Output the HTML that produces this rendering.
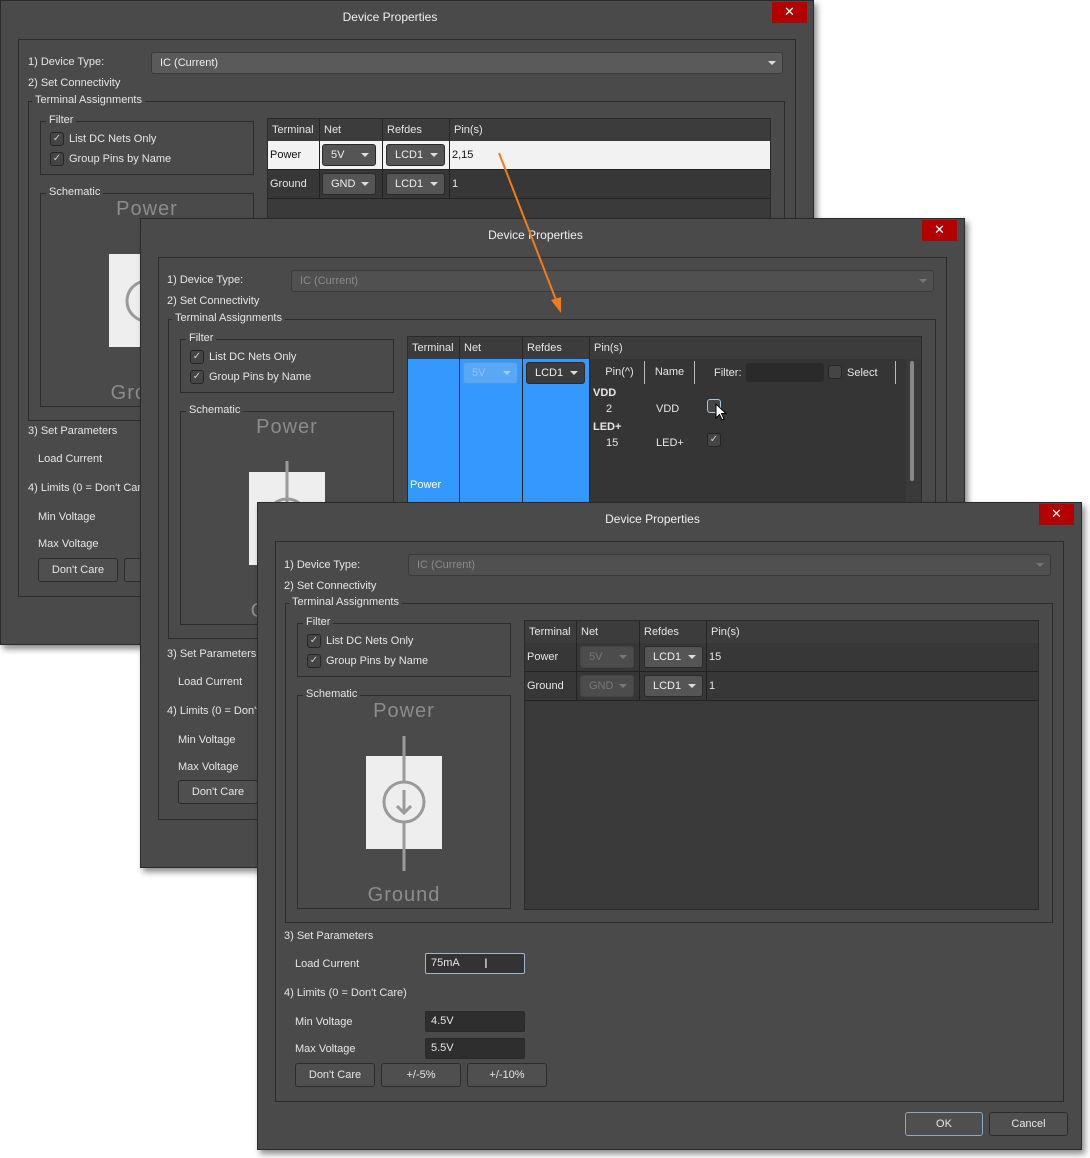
<!DOCTYPE html>
<html><head><meta charset="utf-8">
<style>
*{box-sizing:border-box;margin:0;padding:0}
body{width:1090px;height:1158px;background:#fff;position:relative;overflow:hidden;font-family:"Liberation Sans","DejaVu Sans",sans-serif;font-size:11px;color:#e6e6e6}
.dlg{position:absolute;background:#4a4a4a;border:1px solid #2a2a2a;box-shadow:3px 4px 6px rgba(0,0,0,.45)}
.dlg div,.dlg span{position:absolute}
.title{left:0;right:34px;top:9px;text-align:center;font-size:12px;color:#f0f0f0}
.close{top:1px;width:35px;height:21px;background:#b30000;color:#fff;text-align:center;font-size:13px;line-height:20px}
.outer{left:17px;top:38px;right:17px;bottom:47px;border:1px solid #2c2c2c}
.lbl{white-space:nowrap}
.combo{left:150px;right:30px;top:51px;height:22px;border:1px solid #3a3a3a;border-radius:3px;background:#505050;padding-left:8px;line-height:20px;color:#8a8a8a}
.combo.en{background:#5a5a5a;color:#f0f0f0}
.tri{width:0;height:0;border-left:4px solid transparent;border-right:4px solid transparent;border-top:4px solid #ddd}
.grp{border:1px solid #2c2c2c}
.glab{background:#4a4a4a;padding:0 3px;top:-8px;left:5px;white-space:nowrap}
.cb{width:14px;height:14px;border:1px solid #262626;border-radius:3px;background:#454545;color:#ccc;font-size:10px;line-height:12px;text-align:center}
.sch{font-size:20px;color:#8c8c8c;left:0;right:0;text-align:center;letter-spacing:1px}
.tbl{left:266px;right:42px;top:117px;height:290px;background:#3a3a3a;border:1px solid #2a2a2a}
.th{top:0;height:22px;background:#3c3c3c;line-height:22px;padding-left:4px;border-right:1px solid #262626}
.row{left:0;right:0;height:29px;background:#373737;border-bottom:1px solid #222;line-height:29px}
.cell{top:0;bottom:0;border-right:1px solid #222;padding-left:2px}
.cmb{height:22px;top:3px;border:1px solid #2a2a2a;border-radius:3px;background:#555;line-height:20px;padding-left:8px;color:#eee}
.cmb.dis{background:#4c4c4c;color:#777;border-color:#444}
.cmb .tri{right:6px;top:8px}
.cmb.dis .tri{border-top-color:#777}
.inp{height:21px;border:1px solid #2a2a2a;border-radius:2px;background:#2e2e2e;line-height:19px;padding-left:5px;width:100px;left:167px}
.btn{height:24px;width:80px;border:1px solid #2c2c2c;border-radius:3px;background:#4f4f4f;text-align:center;line-height:22px}
</style></head><body>

<!-- Dialog 1 -->
<div class="dlg" style="left:0;top:0;width:814px;height:645px">
 <div class="title">Device Properties</div>
 <div class="close" style="left:771px">✕</div>
 <div class="outer"></div>
 <span class="lbl" style="left:27px;top:55px">1) Device Type:</span>
 <div class="combo en">IC (Current)<div class="tri" style="right:6px;top:8px"></div></div>
 <span class="lbl" style="left:27px;top:76px">2) Set Connectivity</span>
 <div class="grp" style="left:27px;right:28px;top:100px;height:320px"><span class="glab" style="left:3px">Terminal Assignments</span></div>
 <div class="grp" style="left:39px;top:120px;width:214px;height:54px"><span class="glab">Filter</span></div>
 <div class="cb" style="left:49px;top:131px">✓</div><span class="lbl" style="left:68px;top:132px">List DC Nets Only</span>
 <div class="cb" style="left:49px;top:151px">✓</div><span class="lbl" style="left:68px;top:152px">Group Pins by Name</span>
 <div class="grp" style="left:39px;top:192px;width:214px;height:214px"><span class="glab">Schematic</span>
  <span class="sch" style="top:4px">Power</span>
  <div style="left:68px;top:60px;width:76px;height:93px;background:#eee"></div>
  <span class="sch" style="top:188px">Ground</span>
 </div>
 <svg style="position:absolute;left:107px;top:240px" width="80" height="140"><line x1="39" y1="2" x2="39" y2="135" stroke="#9a9a9a" stroke-width="3"/><circle cx="39" cy="60" r="20" fill="none" stroke="#9a9a9a" stroke-width="3"/></svg>
 <div class="tbl">
  <div class="th" style="left:0;width:52px">Terminal</div>
  <div class="th" style="left:52px;width:63px">Net</div>
  <div class="th" style="left:115px;width:67px">Refdes</div>
  <div class="th" style="left:182px;right:0;border:0">Pin(s)</div>
  <div class="row" style="top:22px;background:#f2f2f2;color:#111">
   <div class="cell" style="left:0;width:52px">Power</div>
   <div class="cell" style="left:52px;width:63px"><div class="cmb" style="left:2px;width:54px">5V<div class="tri"></div></div></div>
   <div class="cell" style="left:115px;width:67px"><div class="cmb" style="left:3px;width:59px">LCD1<div class="tri"></div></div></div>
   <div class="cell" style="left:182px;right:0;border:0">2,15</div>
  </div>
  <div class="row" style="top:51px">
   <div class="cell" style="left:0;width:52px">Ground</div>
   <div class="cell" style="left:52px;width:63px"><div class="cmb" style="left:2px;width:54px">GND<div class="tri"></div></div></div>
   <div class="cell" style="left:115px;width:67px"><div class="cmb" style="left:3px;width:59px">LCD1<div class="tri"></div></div></div>
   <div class="cell" style="left:182px;right:0;border:0">1</div>
  </div>
 </div>
 <span class="lbl" style="left:27px;top:424px">3) Set Parameters</span>
 <span class="lbl" style="left:37px;top:452px">Load Current</span>
 <span class="lbl" style="left:27px;top:481px">4) Limits (0 = Don't Care)</span>
 <span class="lbl" style="left:37px;top:510px">Min Voltage</span>
 <span class="lbl" style="left:37px;top:537px">Max Voltage</span>
 <div class="btn" style="left:37px;top:557px">Don't Care</div>
 <div class="btn" style="left:123px;top:557px">+/-5%</div>
</div>

<!-- Dialog 2 -->
<div class="dlg" style="left:140px;top:218px;width:825px;height:650px">
 <div class="title">Device Properties</div>
 <div class="close" style="left:781px">✕</div>
 <div class="outer"></div>
 <span class="lbl" style="left:26px;top:55px">1) Device Type:</span>
 <div class="combo">IC (Current)<div class="tri" style="right:6px;top:8px;border-top-color:#777"></div></div>
 <span class="lbl" style="left:26px;top:76px">2) Set Connectivity</span>
 <div class="grp" style="left:27px;right:28px;top:100px;height:320px"><span class="glab" style="left:3px">Terminal Assignments</span></div>
 <div class="grp" style="left:39px;top:120px;width:214px;height:54px"><span class="glab">Filter</span></div>
 <div class="cb" style="left:49px;top:131px">✓</div><span class="lbl" style="left:68px;top:132px">List DC Nets Only</span>
 <div class="cb" style="left:49px;top:151px">✓</div><span class="lbl" style="left:68px;top:152px">Group Pins by Name</span>
 <div class="grp" style="left:39px;top:192px;width:214px;height:214px"><span class="glab">Schematic</span>
  <span class="sch" style="top:4px">Power</span>
  <div style="left:68px;top:60px;width:76px;height:93px;background:#eee"></div>
  <span class="sch" style="top:188px">Ground</span>
 </div>
 <svg style="position:absolute;left:107px;top:240px" width="80" height="140"><line x1="39" y1="2" x2="39" y2="135" stroke="#9a9a9a" stroke-width="3"/><circle cx="39" cy="60" r="20" fill="none" stroke="#9a9a9a" stroke-width="3"/></svg>
 <div class="tbl">
  <div class="th" style="left:0;width:52px">Terminal</div>
  <div class="th" style="left:52px;width:63px">Net</div>
  <div class="th" style="left:115px;width:67px">Refdes</div>
  <div class="th" style="left:182px;right:0;border:0">Pin(s)</div>
  <div style="left:0;width:182px;top:22px;height:150px;background:#3399ff"></div>
  <div style="left:51px;top:22px;width:1px;height:150px;background:#222"></div>
  <div style="left:114px;top:22px;width:1px;height:150px;background:#222"></div>
  <div style="left:181px;top:22px;width:1px;height:150px;background:#222"></div>
  <span style="left:2px;top:142px;color:#fff">Power</span>
  <div class="cmb" style="left:55px;top:25px;width:55px;background:#5aa8f5;border-color:#4b98e5;color:#8cc3f9">5V<div class="tri" style="border-top-color:#a8d2fb"></div></div>
  <div class="cmb" style="left:118px;top:25px;width:59px;background:#3c3c3c">LCD1<div class="tri"></div></div>
  <div style="left:182px;top:22px;width:316px;height:150px;background:#353535">
   <div style="left:5px;top:2px;width:50px;height:23px;border-right:1px solid #bbb;line-height:23px;text-align:center">Pin(^)</div>
   <div style="left:55px;top:2px;width:50px;height:23px;border-right:1px solid #bbb;line-height:23px;text-align:center">Name</div>
   <span style="left:124px;top:8px">Filter:</span>
   <div style="left:156px;top:4px;width:78px;height:19px;background:#2a2a2a;border-radius:3px"></div>
   <div class="cb" style="left:238px;top:6px"></div>
   <span style="left:257px;top:8px">Select</span>
   <div style="left:305px;top:2px;width:1px;height:23px;background:#bbb"></div>
   <span style="left:3px;top:28px;font-weight:bold">VDD</span>
   <span style="left:16px;top:44px">2</span><span style="left:66px;top:44px">VDD</span>
   <div class="cb" style="left:117px;top:40px;border-color:#aac4dd"></div>
   <span style="left:3px;top:62px;font-weight:bold">LED+</span>
   <span style="left:16px;top:78px">15</span><span style="left:66px;top:78px">LED+</span>
   <div class="cb" style="left:117px;top:74px">✓</div>
  </div>
  <div style="left:502px;top:24px;width:4px;height:120px;background:#888;border-radius:2px"></div>
 </div>
 <svg style="position:absolute;left:574px;top:184px" width="14" height="20"><path d="M1 1 L1 15 L4.5 11.5 L7 17 L9 16 L6.5 10.5 L11 10.5 Z" fill="#fff" stroke="#000" stroke-width="1"/></svg>
 <span class="lbl" style="left:26px;top:429px">3) Set Parameters</span>
 <span class="lbl" style="left:37px;top:457px">Load Current</span>
 <span class="lbl" style="left:26px;top:486px">4) Limits (0 = Don't Care)</span>
 <span class="lbl" style="left:37px;top:515px">Min Voltage</span>
 <span class="lbl" style="left:37px;top:542px">Max Voltage</span>
 <div class="btn" style="left:37px;top:561px">Don't Care</div>
</div>

<!-- Dialog 3 -->
<div class="dlg" style="left:257px;top:502px;width:825px;height:648px">
 <div class="title">Device Properties</div>
 <div class="close" style="left:781px">✕</div>
 <div class="outer"></div>
 <span class="lbl" style="left:26px;top:56px">1) Device Type:</span>
 <div class="combo">IC (Current)<div class="tri" style="right:6px;top:8px;border-top-color:#777"></div></div>
 <span class="lbl" style="left:26px;top:77px">2) Set Connectivity</span>
 <div class="grp" style="left:27px;right:28px;top:100px;height:320px"><span class="glab" style="left:3px">Terminal Assignments</span></div>
 <div class="grp" style="left:39px;top:120px;width:214px;height:54px"><span class="glab">Filter</span></div>
 <div class="cb" style="left:49px;top:131px">✓</div><span class="lbl" style="left:68px;top:132px">List DC Nets Only</span>
 <div class="cb" style="left:49px;top:151px">✓</div><span class="lbl" style="left:68px;top:152px">Group Pins by Name</span>
 <div class="grp" style="left:39px;top:192px;width:214px;height:214px"><span class="glab">Schematic</span>
  <span class="sch" style="top:4px">Power</span>
  <div style="left:68px;top:60px;width:76px;height:93px;background:#eee"></div>
  <span class="sch" style="top:188px">Ground</span>
 </div>
 <svg style="position:absolute;left:107px;top:232px" width="80" height="140"><line x1="39" y1="1" x2="39" y2="136" stroke="#9a9a9a" stroke-width="3"/><circle cx="39" cy="67" r="20" fill="#eee" stroke="#9a9a9a" stroke-width="3"/><path d="M39 55 L39 78 M32 71 L39 78 L46 71" fill="none" stroke="#9a9a9a" stroke-width="3"/></svg>
 <div class="tbl">
  <div class="th" style="left:0;width:52px">Terminal</div>
  <div class="th" style="left:52px;width:63px">Net</div>
  <div class="th" style="left:115px;width:67px">Refdes</div>
  <div class="th" style="left:182px;right:0;border:0">Pin(s)</div>
  <div class="row" style="top:22px">
   <div class="cell" style="left:0;width:52px">Power</div>
   <div class="cell" style="left:52px;width:63px"><div class="cmb dis" style="left:3px;width:54px">5V<div class="tri"></div></div></div>
   <div class="cell" style="left:115px;width:67px"><div class="cmb" style="left:4px;width:59px">LCD1<div class="tri"></div></div></div>
   <div class="cell" style="left:182px;right:0;border:0">15</div>
  </div>
  <div class="row" style="top:51px">
   <div class="cell" style="left:0;width:52px">Ground</div>
   <div class="cell" style="left:52px;width:63px"><div class="cmb dis" style="left:3px;width:54px">GND<div class="tri"></div></div></div>
   <div class="cell" style="left:115px;width:67px"><div class="cmb" style="left:4px;width:59px">LCD1<div class="tri"></div></div></div>
   <div class="cell" style="left:182px;right:0;border:0">1</div>
  </div>
 </div>
 <span class="lbl" style="left:26px;top:427px">3) Set Parameters</span>
 <span class="lbl" style="left:37px;top:455px">Load Current</span>
 <div class="inp" style="top:450px;background:#333;border-color:#9bb8d6">75mA<span style="left:58px;top:1px;color:#ddd;font-size:14px;line-height:16px">I</span></div>
 <span class="lbl" style="left:26px;top:484px">4) Limits (0 = Don't Care)</span>
 <span class="lbl" style="left:37px;top:513px">Min Voltage</span>
 <div class="inp" style="top:508px">4.5V</div>
 <span class="lbl" style="left:37px;top:540px">Max Voltage</span>
 <div class="inp" style="top:535px">5.5V</div>
 <div class="btn" style="left:37px;top:560px">Don't Care</div>
 <div class="btn" style="left:123px;top:560px">+/-5%</div>
 <div class="btn" style="left:209px;top:560px">+/-10%</div>
 <div class="btn" style="left:647px;top:609px;width:78px;border-color:#8aa7c4">OK</div>
 <div class="btn" style="left:731px;top:609px;width:79px">Cancel</div>
</div>

<svg style="position:absolute;left:0;top:0" width="1090" height="1158">
 <line x1="499" y1="153" x2="556" y2="300" stroke="#f07c1c" stroke-width="2"/>
 <path d="M551 300 L561 313 L561 297 Z" fill="#f07c1c"/>
</svg>
</body></html>
